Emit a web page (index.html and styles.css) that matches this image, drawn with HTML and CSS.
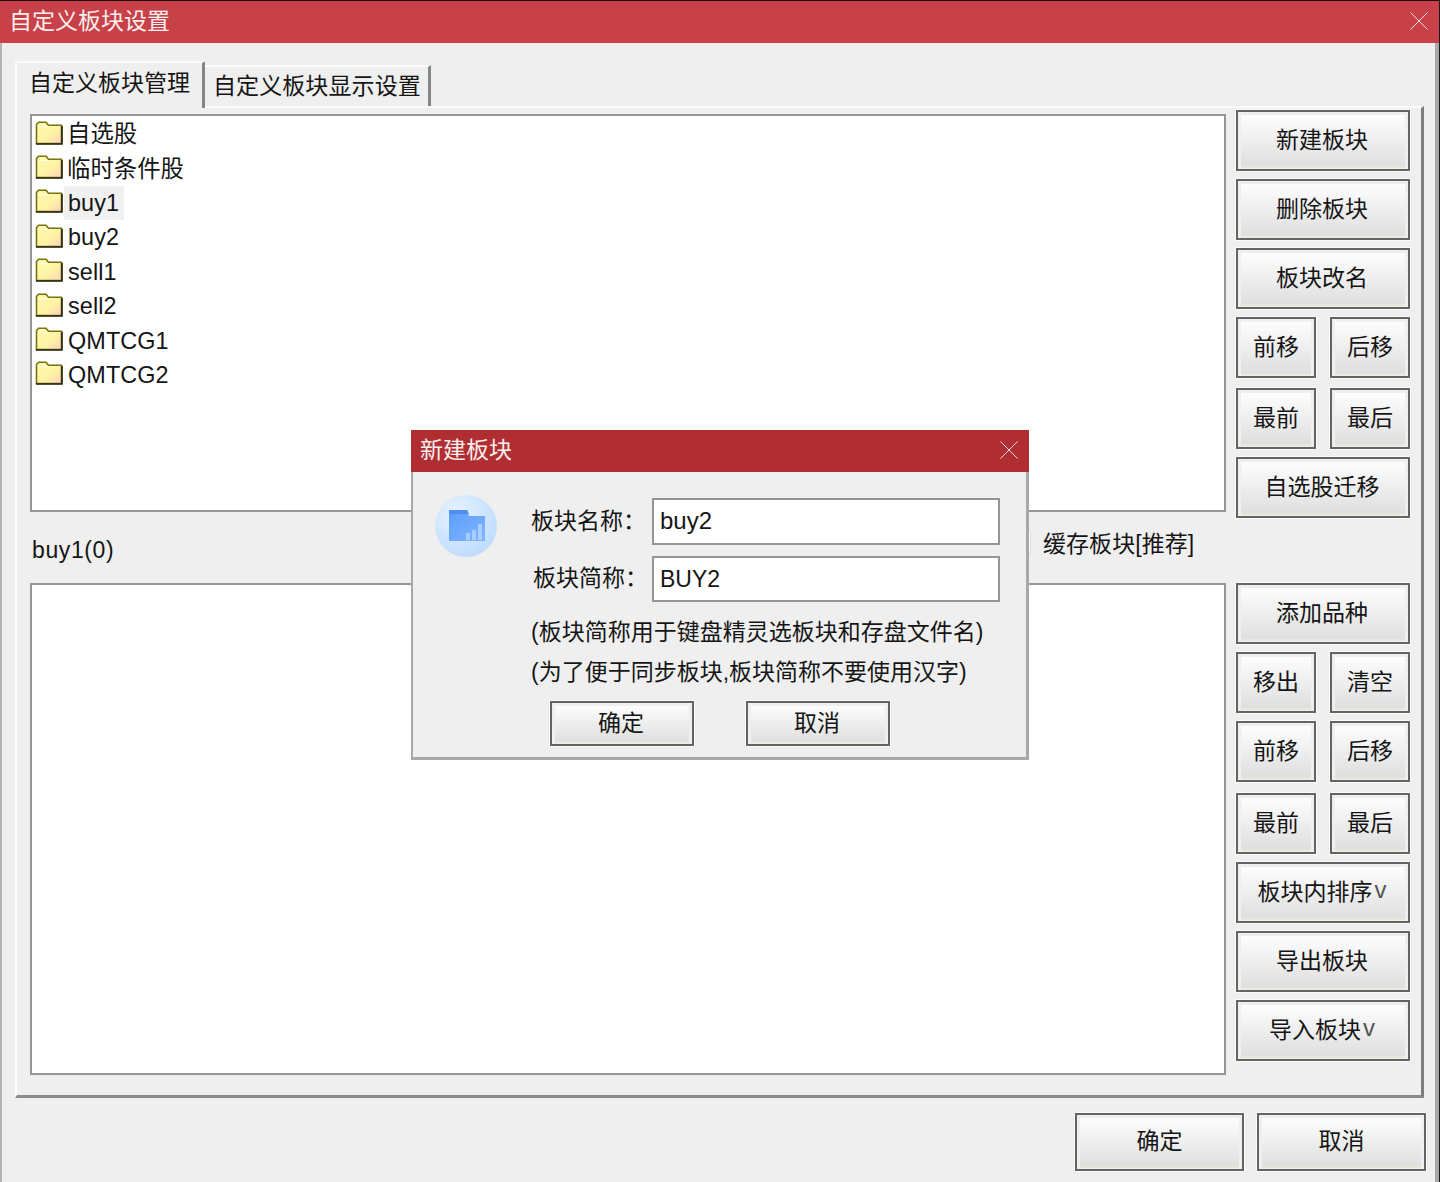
FILE: index.html
```html
<!DOCTYPE html>
<html lang="zh-CN">
<head>
<meta charset="utf-8">
<title>自定义板块设置</title>
<link rel="stylesheet" href="styles.css">
</head>
<body>
<svg class="defs" width="0" height="0" aria-hidden="true">
  <defs>
    <linearGradient id="folderFill" x1="0" y1="0" x2="1" y2="1">
      <stop offset="0" stop-color="#fffbb0"/>
      <stop offset="0.6" stop-color="#fff2a4"/>
      <stop offset="1" stop-color="#ffd0c4"/>
    </linearGradient>
    <symbol id="folder" viewBox="0 0 28 24">
      <path d="M1.5 22.5V3.5L3.5 1.2H11L13.5 4.2H26.5V22.5Z" fill="url(#folderFill)" stroke="#77730f" stroke-width="1.6"/>
      <path d="M1 23H27V5" fill="none" stroke="#25250f" stroke-width="1.6"/>
      <path d="M3 5.6H13" stroke="#fffde8" stroke-width="1"/>
    </symbol>
  </defs>
</svg>
<div class="window">
  <header class="titlebar">
    <span class="title-text">自定义板块设置</span>
    <svg class="close" viewBox="0 0 18 18"><path d="M0.5 0.5L17.5 17.5M17.5 0.5L0.5 17.5"/></svg>
  </header>
  <main class="client">
    <nav class="tabs">
      <div class="tab tab-active">自定义板块管理</div>
      <div class="tab tab-other">自定义板块显示设置</div>
    </nav>
    <section class="panel">
      <div class="section">
        <ul class="list list-top">
          <li class="row"><svg class="folder"><use href="#folder"/></svg><span class="row-text">自选股</span></li>
          <li class="row"><svg class="folder"><use href="#folder"/></svg><span class="row-text">临时条件股</span></li>
          <li class="row"><svg class="folder"><use href="#folder"/></svg><span class="row-text latin selected">buy1</span></li>
          <li class="row"><svg class="folder"><use href="#folder"/></svg><span class="row-text latin">buy2</span></li>
          <li class="row"><svg class="folder"><use href="#folder"/></svg><span class="row-text latin">sell1</span></li>
          <li class="row"><svg class="folder"><use href="#folder"/></svg><span class="row-text latin">sell2</span></li>
          <li class="row"><svg class="folder"><use href="#folder"/></svg><span class="row-text latin">QMTCG1</span></li>
          <li class="row"><svg class="folder"><use href="#folder"/></svg><span class="row-text latin">QMTCG2</span></li>
        </ul>
        <div class="buttons">
          <button class="btn btn-side">新建板块</button>
          <button class="btn btn-side">删除板块</button>
          <button class="btn btn-side">板块改名</button>
          <div class="pair"><button class="btn btn-side">前移</button><button class="btn btn-side">后移</button></div>
          <div class="pair pair-gap"><button class="btn btn-side">最前</button><button class="btn btn-side">最后</button></div>
          <button class="btn btn-side">自选股迁移</button>
        </div>
      </div>
      <div class="midrow">
        <span class="count">buy1(0)</span>
        <label class="cache"><span class="check"></span><span>缓存板块[推荐]</span></label>
      </div>
      <div class="section">
        <div class="list list-bottom"></div>
        <div class="buttons">
          <button class="btn btn-side">添加品种</button>
          <div class="pair"><button class="btn btn-side">移出</button><button class="btn btn-side">清空</button></div>
          <div class="pair"><button class="btn btn-side">前移</button><button class="btn btn-side">后移</button></div>
          <div class="pair pair-gap-lg"><button class="btn btn-side">最前</button><button class="btn btn-side">最后</button></div>
          <button class="btn btn-side">板块内排序<span class="caret">v</span></button>
          <button class="btn btn-side">导出板块</button>
          <button class="btn btn-side">导入板块<span class="caret">v</span></button>
        </div>
      </div>
    </section>
    <footer class="footer">
      <button class="btn btn-foot">确定</button>
      <button class="btn btn-foot">取消</button>
    </footer>
  </main>

  <div class="dialog">
    <header class="dlg-title">
      <span class="title-text">新建板块</span>
      <svg class="close" viewBox="0 0 18 18"><path d="M0.5 0.5L17.5 17.5M17.5 0.5L0.5 17.5"/></svg>
    </header>
    <div class="dlg-body">
      <svg class="dlg-icon" viewBox="0 0 62 62">
        <defs>
          <radialGradient id="disc" cx="0.35" cy="0.3" r="0.85">
            <stop offset="0" stop-color="#e6f2ff"/>
            <stop offset="1" stop-color="#b9d9ff"/>
          </radialGradient>
          <linearGradient id="fold" x1="0" y1="0" x2="1" y2="1">
            <stop offset="0" stop-color="#5c9cfb"/>
            <stop offset="1" stop-color="#7fb6ff"/>
          </linearGradient>
        </defs>
        <circle cx="31" cy="31" r="31" fill="url(#disc)"/>
        <path d="M14 15H32L34 21H50V46H14Z" fill="url(#fold)"/>
        <path d="M14 15H32L34 19H14Z" fill="#4e8ff5"/>
        <path d="M31 38H35V45H31ZM37 35H41V45H37ZM43 29H47V45H43Z" fill="#a8cdff"/>
      </svg>
      <div class="dlg-form">
        <div class="field"><span class="field-label">板块名称：</span><div class="input input-lower">buy2</div></div>
        <div class="field field-second"><span class="field-label label-shift">板块简称：</span><div class="input">BUY2</div></div>
        <p class="hint">(板块简称用于键盘精灵选板块和存盘文件名)</p>
        <p class="hint">(为了便于同步板块,板块简称不要使用汉字)</p>
        <div class="dlg-actions">
          <button class="btn btn-dlg">确定</button>
          <button class="btn btn-dlg">取消</button>
        </div>
      </div>
    </div>
  </div>
</div>
</body>
</html>
```

FILE: styles.css
```css
* { box-sizing: border-box; }
html, body { margin: 0; padding: 0; }
body {
  width: 1440px;
  height: 1182px;
  overflow: hidden;
  background: #efefef;
  color: #151515;
  font-family: "Liberation Sans", "Noto Sans CJK SC", sans-serif;
  font-size: 23px;
}
.defs { position: absolute; }

.window {
  position: relative;
  width: 1440px;
  height: 1182px;
  display: flex;
  flex-direction: column;
  background: #efefef;
  border-right: 1px solid #1a1a1a;
}

.titlebar {
  flex: none;
  height: 43px;
  display: flex;
  align-items: center;
  justify-content: space-between;
  padding: 0 11px 2px 9px;
  background: #c84148;
  border-top: 1px solid #1a0c0c;
}
.title-text { color: #fbeeee; line-height: 32px; }
.close { width: 18px; height: 18px; flex: none; }
.close path { stroke: #f3dcdc; stroke-width: 1; fill: none; }

.client {
  flex: 1;
  display: flex;
  flex-direction: column;
  padding: 18px 0 0 13px;
  border-left: 2px solid #b4b4b4;
  border-right: 4px solid #a8a8a8;
}

.tabs {
  position: relative;
  z-index: 1;
  height: 47px;
  display: flex;
  align-items: flex-end;
}
.tab {
  background: #efefef;
  border-top: 2px solid #fbfbfb;
  border-left: 2px solid #fbfbfb;
  border-right: 3px solid #858585;
}
.tab-active {
  width: 190px;
  height: 47px;
  padding-left: 12px;
  line-height: 40px;
  border-radius: 2px 2px 0 0;
}
.tab-other {
  width: 226px;
  height: 41px;
  margin-bottom: 2px;
  padding-left: 8px;
  line-height: 39px;
  font-size: 23.1px;
  border-left: 0;
}

.panel {
  width: 1409px;
  height: 992px;
  margin-top: -2px;
  padding: 2px 11px 0 13px;
  border-top: 2px solid #fbfbfb;
  border-left: 2px solid #fbfbfb;
  border-right: 3px solid #7e7e7e;
  border-bottom: 3px solid #8a8a8a;
}

.section {
  display: flex;
  gap: 10px;
  align-items: flex-start;
}

.list {
  width: 1196px;
  margin: 0;
  padding: 0;
  list-style: none;
  background: #fff;
  border: 2px solid #969696;
}
.list-top {
  height: 398px;
  margin-top: 4px;
  padding: 1px 0 0 3px;
  font-size: 23.4px;
}
.list-bottom { height: 492px; }

.row {
  height: 34.4px;
  display: flex;
  align-items: center;
}
.folder { width: 28px; height: 24px; flex: none; margin-top: -3px; }
.row-text {
  margin-left: 4px;
  padding: 0 5px 0 0;
  height: 34px;
  line-height: 34px;
}
.latin { margin-left: 5px; letter-spacing: 0.1px; }
.selected { background: #f0f0f0; margin-left: 1px; padding-left: 4px; }

.buttons {
  width: 174px;
  flex: none;
  display: flex;
  flex-direction: column;
  gap: 8px;
}
.pair { display: flex; justify-content: space-between; }
.pair .btn { width: 80px; }
.pair-gap { margin-top: 2px; }
.pair-gap-lg { margin-top: 3px; }

.btn {
  display: flex;
  align-items: center;
  justify-content: center;
  padding: 0 2px 6px 0;
  font: inherit;
  color: #151515;
  border: 2px solid #646464;
  background: linear-gradient(#ffffff, #dddddd);
  box-shadow:
    inset 0 0 0 1px #efefef,
    inset 0 3px 0 #efefef,
    inset 3px 0 0 #efefef,
    inset -3px 0 0 #efefef,
    inset 0 -3px 0 #e9e5da,
    0 0 0 1px #fbfbfb;
  cursor: default;
}
.pair .btn, .btn-foot { padding-right: 0; }
.btn-side { height: 61px; }
.caret { font-size: 24px; line-height: 24px; color: #555; margin: 0 0 0 2px; }

.midrow {
  height: 65px;
  display: flex;
  align-items: center;
  justify-content: space-between;
  padding-left: 2px;
}
.count { line-height: 30px; letter-spacing: 0.6px; margin-top: -2px; }
.cache {
  display: flex;
  align-items: center;
  gap: 12px;
  margin: -17px 215px 0 0;
}
.cache span:last-child { width: 152px; letter-spacing: 0.05px; }
.check {
  width: 24px;
  height: 24px;
  background: #fff;
  border: 1px solid #dcdcdc;
}

.footer {
  display: flex;
  justify-content: flex-end;
  gap: 13px;
  margin-top: 15px;
  padding-right: 9px;
}
.btn-foot { width: 169px; height: 58px; }

.dialog {
  position: absolute;
  left: 411px;
  top: 430px;
  width: 618px;
  height: 330px;
  display: flex;
  flex-direction: column;
  background: #efefef;
}
.dlg-title {
  flex: none;
  height: 42px;
  display: flex;
  align-items: center;
  justify-content: space-between;
  padding: 0 11px 2px 9px;
  background: #b02e32;
}
.dlg-body {
  flex: 1;
  display: flex;
  padding: 23px 0 0 22px;
  border-left: 2px solid #a8a8a8;
  border-right: 3px solid #a8a8a8;
  border-bottom: 3px solid #a8a8a8;
}
.dlg-icon { width: 62px; height: 62px; flex: none; margin-right: 34px; }
.dlg-form { width: 469px; margin-top: 3px; }
.field { display: flex; align-items: center; height: 47px; }
.field-second { height: 46px; margin-top: 11px; }
.field-label { width: 121px; flex: none; white-space: nowrap; padding-bottom: 6px; }
.label-shift { padding-left: 2px; }
.input {
  width: 348px;
  height: 100%;
  padding: 0 6px;
  display: flex;
  align-items: center;
  background: #fff;
  border: 2px solid #959595;
}
.input-lower { font-size: 24px; padding-bottom: 2px; }
.hint { margin: 0; height: 40px; line-height: 40px; white-space: nowrap; }
.hint:first-of-type { margin-top: 10px; }
.dlg-actions { display: flex; gap: 52px; margin: 9px 0 0 19px; }
.btn-dlg { width: 144px; height: 45px; }
```
